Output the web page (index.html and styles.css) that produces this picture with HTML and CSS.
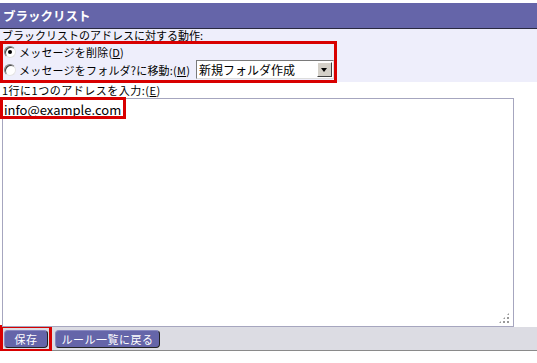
FILE: index.html
```html
<!DOCTYPE html>
<html lang="ja">
<head>
  <meta charset="UTF-8">
  <title>ブラックリスト</title>
  <link rel="stylesheet" href="styles.css">
</head>
<body>
  <div class="title">ブラックリスト</div>

  <!-- 動作の選択 -->
  <div class="options">
    <div class="caption">ブラックリストのアドレスに対する動作:</div>
    <div class="choices mark">
      <label class="choice">
        <input type="radio" name="action" checked>
        <span>メッセージを削除(<u>D</u>)</span>
      </label>
      <label class="choice">
        <input type="radio" name="action">
        <span>メッセージをフォルダ?に移動:(<u>M</u>)</span>
        <span class="select-box">
          <select>
            <option>新規フォルダ作成</option>
          </select>
          <span class="arrow"></span>
        </span>
      </label>
    </div>
  </div>

  <!-- アドレス入力 -->
  <div class="caption addr-caption">1行に1つのアドレスを入力:(<u>E</u>)</div>
  <div class="editor">
    <textarea>info@example.com</textarea>
    <span class="mark mark-addr"></span>
    <span class="grip"></span>
  </div>

  <div class="bar">
    <span class="mark mark-save"><button class="btn btn-save">保存</button></span>
    <button class="btn btn-back">ルール一覧に戻る</button>
  </div>
</body>
</html>
```

FILE: styles.css
```css
body { margin: 0; font-family: "Noto Sans CJK JP", sans-serif; font-size: 11px; color: #000; background: #fff; width: 537px; }

.title { margin-top: 3px; height: 25px; line-height: 25px; padding-left: 3px; background: #6565a9; color: #fff; font-size: 12.5px; font-weight: bold; border-bottom: 1px solid #2a2a40; }

.options { background: #eeeefb; height: 53px; }
.caption { line-height: 12px; height: 12px; padding-left: 2px; white-space: nowrap; }
.caption u, .choice u { text-decoration: underline; }

.mark { border: 3px solid #d80000; }
.choices { width: 331px; height: 36px; display: flex; flex-direction: column; }
.choice { display: flex; align-items: center; height: 15px; gap: 3px; white-space: nowrap; line-height: 12px; letter-spacing: 0.2px; }
.choice + .choice { height: 21px; }

.choice input { appearance: none; margin: 0 0 0 1px; width: 12px; height: 12px; border-radius: 50%; background: #fff; border: 1px solid #808080; border-right-color: #e4e4e4; border-bottom-color: #e4e4e4; box-shadow: inset 1px 1px 0 #404040; position: relative; }
.choice input:checked::after { content: ""; position: absolute; left: 3px; top: 3px; width: 4px; height: 4px; border-radius: 50%; background: #000; }

.select-box { display: flex; margin-left: 3px; width: 138px; height: 19px; box-sizing: border-box; border: 1px solid #7a7a7a; border-right-color: #ddd; border-bottom-color: #ddd; background: #fff; letter-spacing: 0; }
.select-box select { appearance: none; flex: 1; min-width: 0; border: none; background: #fff; font: inherit; font-size: 12px; padding: 0 0 0 2px; margin: 0; outline: none; }
.arrow { width: 15px; height: 15px; margin: 1px; background: #d4d0c8; border: 1px solid #fff; border-right-color: #404040; border-bottom-color: #404040; box-sizing: border-box; position: relative; }
.arrow::after { content: ""; position: absolute; left: 3px; top: 5px; border-left: 3.5px solid transparent; border-right: 3.5px solid transparent; border-top: 4px solid #000; }

.addr-caption { margin-top: 2px; height: 14px; line-height: 12px; letter-spacing: 0.5px; }

.editor { position: relative; height: 229px; }
.editor textarea { display: block; margin-left: 2px; width: 512px; height: 229px; box-sizing: border-box; border: 1px solid #a6a6bf; font: inherit; font-size: 13px; padding: 1px 1px; resize: none; outline: none; }
.mark-addr { position: absolute; left: 0; top: -1px; width: 120px; height: 16px; }
.grip { position: absolute; left: 498px; top: 214px; width: 12px; height: 12px; background: radial-gradient(circle, #999 0.8px, transparent 1px) 0 0 / 4px 4px; clip-path: polygon(100% 0, 100% 100%, 0 100%); }

.bar { display: flex; align-items: center; gap: 3px; height: 23px; background: #dcdce3; border-bottom: 1px solid #8a8a8a; }
.mark-save { display: flex; align-items: center; height: 21px; padding: 0 1px; }
.btn { height: 18px; padding: 0; text-align: center; background: #6565a9; color: #fff; font: inherit; font-size: 11px; line-height: 14px; border: 1px solid #8888c0; border-right-color: #222; border-bottom-color: #222; border-radius: 4px; cursor: pointer; white-space: nowrap; letter-spacing: 0.5px; }
.btn-save { width: 44px; }
.btn-back { width: 105px; }
```
